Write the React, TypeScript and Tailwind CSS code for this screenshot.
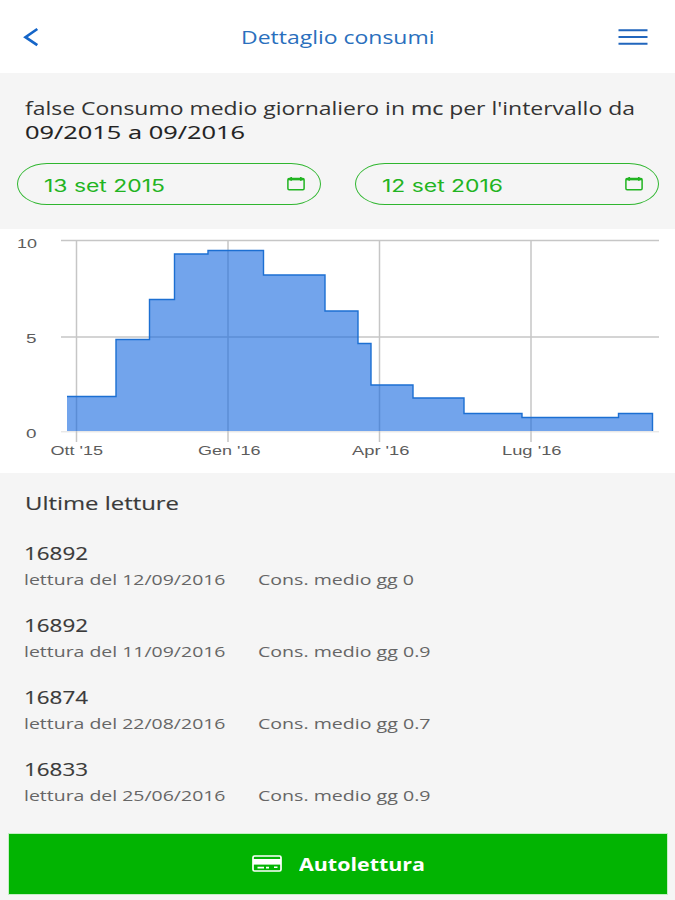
import { useLayoutEffect, useRef, useState } from "react";
import type { ReactNode } from "react";

/** One line of text, widened or narrowed to fill exactly `width` pixels. */
function FitText({ children, width, className = "" }: { children: ReactNode; width: number; className?: string }) {
  const ref = useRef<HTMLSpanElement>(null);
  const [scale, setScale] = useState(1);
  useLayoutEffect(() => {
    if (ref.current) setScale(width / parseFloat(getComputedStyle(ref.current).width));
  }, [width, children]);
  return (
    <span className={`block text-left ${className}`} style={{ width }}>
      <span ref={ref} className="inline-block origin-left whitespace-pre align-top" style={{ transform: `scaleX(${scale})` }}>
        {children}
      </span>
    </span>
  );
}

function CalendarIcon() {
  return (
    <svg width="18" height="15" viewBox="0 0 18 15" fill="none" stroke="#22b422" className="mb-px">
      <rect x="0.9" y="2.5" width="16.2" height="11.2" rx="1.2" strokeWidth="1.5" />
      <path d="M1 3.5H17" strokeWidth="1.7" />
      <path d="M4.2 1V4.8M13.8 1V4.8" strokeWidth="1.7" />
    </svg>
  );
}

function DateField({ value, width }: { value: string; width: number }) {
  return (
    <button className="flex h-[42px] w-[304px] items-center justify-between rounded-[30px/21px] border-[1.5px] border-[#2fb62f] pl-[26px] pr-[15px] font-['Inter',sans-serif] text-[17px] leading-[24px] text-[#22b422]">
      <FitText width={width} className="pt-[3px]">{value}</FitText>
      <CalendarIcon />
    </button>
  );
}

const steps: [number, number][] = [
  [67, 167.5], [116, 110.5], [149.5, 70.5], [174.5, 25], [208, 21.5], [263.5, 46], [325, 82],
  [358, 114.5], [371, 156], [413, 169], [464, 184.5], [522, 188.5], [618.5, 184.5],
];
const outline = steps.map(([x, y], i) => `${i ? "H" : "M"}${x}${i ? "" : " " + y}${i ? "V" + y : ""}`).join("") + "H652.5V202";

function Chart() {
  return (
    <svg width="675" height="244" viewBox="0 0 675 244" className="block bg-white">
      <g stroke="#c6c6c6">
        <path d="M61 11.5H659M61 108H659" strokeWidth="1.3" />
        <path d="M61 202.8H659" stroke="#dedede" strokeWidth="1" />
        <path d="M76.5 11V213M228 11V213M379.5 11V213M531 11V213" strokeWidth="1.5" />
      </g>
      <path d={`${outline}H67Z`} fill="#1467df" fillOpacity="0.6" />
      <path d={outline} fill="none" stroke="#1c6fd2" strokeWidth="1.4" />
      <g fill="#5c5c5c" fontFamily="Liberation Sans, Arial, sans-serif" fontSize="13.2">
        <text x="17" y="19.3" textLength="20" lengthAdjust="spacingAndGlyphs">10</text>
        <text x="26" y="114.3" textLength="10.5" lengthAdjust="spacingAndGlyphs">5</text>
        <text x="26" y="209" textLength="10.5" lengthAdjust="spacingAndGlyphs">0</text>
        <text x="50.5" y="226.3" textLength="52.5" lengthAdjust="spacingAndGlyphs">Ott '15</text>
        <text x="198" y="226.3" textLength="62.5" lengthAdjust="spacingAndGlyphs">Gen '16</text>
        <text x="352" y="226.3" textLength="57.5" lengthAdjust="spacingAndGlyphs">Apr '16</text>
        <text x="502" y="226.3" textLength="59.5" lengthAdjust="spacingAndGlyphs">Lug '16</text>
      </g>
    </svg>
  );
}

const readings = [
  { value: "16892", date: "12/09/2016", avg: "0", w: 156 },
  { value: "16892", date: "11/09/2016", avg: "0.9", w: 172.5 },
  { value: "16874", date: "22/08/2016", avg: "0.7", w: 172.5 },
  { value: "16833", date: "25/06/2016", avg: "0.9", w: 172.5 },
];

export default function App() {
  return (
    <div className="flex h-[900px] w-[675px] flex-col overflow-hidden bg-[#f5f5f5] font-['Open_Sans',sans-serif] text-[17.5px] leading-[24px]">
      <header className="flex h-[73px] items-center bg-white pl-[23px] pr-[27px]">
        <svg width="30" height="20" viewBox="0 0 30 20" fill="none" stroke="#1565c8" strokeWidth="2.7">
          <path d="M14.3 2L2.5 10.2L14.3 18.2" />
        </svg>
        <h1 className="ml-[188px] text-[#2a6fbd]">
          <FitText width={193.5}>Dettaglio consumi</FitText>
        </h1>
        <svg width="30" height="18" viewBox="0 0 30 18" stroke="#2166bd" strokeWidth="2.1" className="ml-auto">
          <path d="M0.5 2.2H29.5M0.5 9H29.5M0.5 15.8H29.5" />
        </svg>
      </header>

      <section className="h-[156px] pt-[23px]">
        <div className="pl-[25px] text-[#333]">
          <FitText width={610}>
            false Consumo medio giornaliero in <b className="font-normal [-webkit-text-stroke:0.2px]">mc</b> per l'intervallo da
          </FitText>
          <FitText width={220} className="text-[#222] [-webkit-text-stroke:0.1px]">09/2015 a 09/2016</FitText>
        </div>
        <div className="mt-[19px] flex justify-between pl-[17px] pr-[16px]">
          <DateField value="13 set 2015" width={121} />
          <DateField value="12 set 2016" width={121} />
        </div>
      </section>

      <Chart />

      <section className="flex h-[360px] flex-col pl-[24px] pt-[18px] text-[#3a3a3a]">
        <h2 className="pl-px [-webkit-text-stroke:0.15px]">
          <FitText width={154}>Ultime letture</FitText>
        </h2>
        <ul className="mt-[26px]">
          {readings.map((r) => (
            <li key={r.date} className="h-[72px]">
              <FitText width={64} className="[-webkit-text-stroke:0.15px]">{r.value}</FitText>
              <div className="mt-[2px] flex text-[15.3px] text-[#666]">
                <FitText width={201.5}>{`lettura del ${r.date}`}</FitText>
                <FitText width={r.w} className="ml-[32.5px]">{`Cons. medio gg ${r.avg}`}</FitText>
              </div>
            </li>
          ))}
        </ul>
      </section>

      <button className="ml-[9px] mt-[1px] flex h-[60px] w-[658px] items-center bg-[#02b402] pl-[243px] text-white ring-1 ring-[#c4efc4]">
        <svg width="30" height="17" viewBox="0 0 30 17" fill="none" className="mb-px">
          <rect x="1" y="1" width="28" height="15" rx="1.5" stroke="white" strokeWidth="1.7" />
          <rect x="1" y="4" width="28" height="5.6" fill="white" />
          <path d="M5.5 12.6H12M14 12.6H17M22 12.2H25.5" stroke="white" strokeWidth="1.6" />
        </svg>
        <FitText width={126} className="mb-px ml-[17px] font-bold">Autolettura</FitText>
      </button>
    </div>
  );
}
